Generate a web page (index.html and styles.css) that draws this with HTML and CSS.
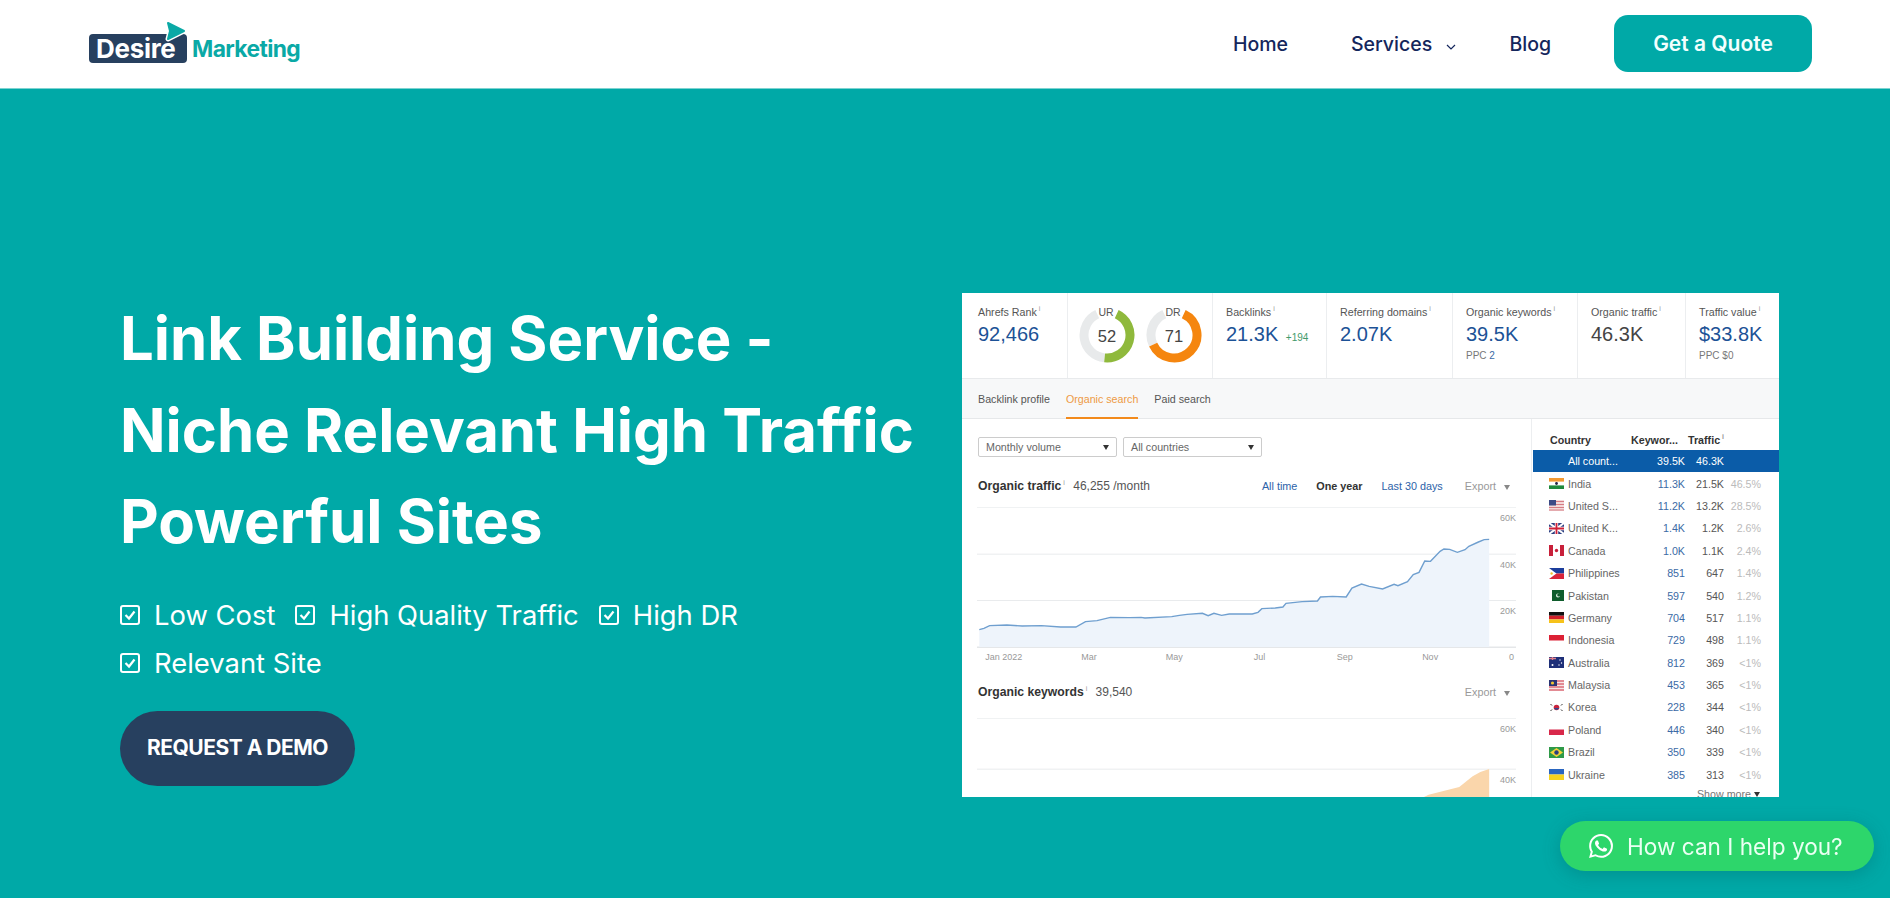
FILE: index.html
```html
<!DOCTYPE html>
<html lang="en">
<head>
<meta charset="utf-8">
<title>Link Building Service - Desire Marketing</title>
<link rel="stylesheet" href="styles.css">
</head>
<body>
<header class="topbar">
	<a class="logo" href="#">
		<span class="logoBox">Desire
			<svg class="logoArrow" width="24" height="24" viewBox="0 0 24 24"><path d="M5 3 L21 11 L5 19 L7 11 Z" fill="#0aa9a6" stroke="#fff" stroke-width="5" stroke-linejoin="round"/><path d="M5 3 L21 11 L5 19 L7 11 Z" fill="#0aa9a6" stroke="#0aa9a6" stroke-width="2" stroke-linejoin="round"/></svg>
		</span>
		<span class="logoWord">Marketing</span>
	</a>
	<nav class="mainnav">
		<a href="#">Home</a>
		<a class="hasMenu" href="#">Services
			<svg width="10" height="6" viewBox="0 0 10 6"><path d="M1 1 L5 5 L9 1" fill="none" stroke="#14265c" stroke-width="1.2"/></svg>
		</a>
		<a class="navLast" href="#">Blog</a>
	</nav>
	<a class="quoteBtn" href="#">Get a Quote</a>
</header>

<section class="hero">
	<div class="heroText">
		<h1>Link Building Service -<br>Niche Relevant High Traffic<br>Powerful Sites</h1>
		<ul class="ticks">
			<li><svg width="20" height="20" viewBox="0 0 20 20"><rect x="1" y="1" width="18" height="18" rx="2" fill="none" stroke="#fff" stroke-width="2"/><path d="M5.5 10 L9 13.5 L14.5 6.5" fill="none" stroke="#fff" stroke-width="2.2"/></svg>Low Cost</li>
			<li><svg width="20" height="20" viewBox="0 0 20 20"><rect x="1" y="1" width="18" height="18" rx="2" fill="none" stroke="#fff" stroke-width="2"/><path d="M5.5 10 L9 13.5 L14.5 6.5" fill="none" stroke="#fff" stroke-width="2.2"/></svg>High Quality Traffic</li>
			<li><svg width="20" height="20" viewBox="0 0 20 20"><rect x="1" y="1" width="18" height="18" rx="2" fill="none" stroke="#fff" stroke-width="2"/><path d="M5.5 10 L9 13.5 L14.5 6.5" fill="none" stroke="#fff" stroke-width="2.2"/></svg>High DR</li>
			<li><svg width="20" height="20" viewBox="0 0 20 20"><rect x="1" y="1" width="18" height="18" rx="2" fill="none" stroke="#fff" stroke-width="2"/><path d="M5.5 10 L9 13.5 L14.5 6.5" fill="none" stroke="#fff" stroke-width="2.2"/></svg>Relevant Site</li>
		</ul>
		<a class="demoBtn" href="#">REQUEST A DEMO</a>
	</div>

	<div class="shot">
		<div class="stats">
			<div class="stat first">
				<div class="statLabel">Ahrefs Rank<sup>i</sup></div>
				<div class="statValue">92,466</div>
			</div>
			<div class="stat gauges">
				<svg width="56" height="60" viewBox="0 0 56 60"><path d="M25.6 50.87 A23 23 0 0 1 18.28 7.15" fill="none" stroke="#e8eaeb" stroke-width="9"/><path d="M37.72 7.15 A23 23 0 0 1 25.6 50.87" fill="none" stroke="#8fb93c" stroke-width="9"/><text class="gaugeNum" x="28" y="35" text-anchor="middle">52</text><text class="gaugeLabel" x="27" y="9" text-anchor="middle">UR</text></svg>
				<svg width="56" height="60" viewBox="0 0 56 60"><path d="M7.15 37.72 A23 23 0 0 1 18.28 7.15" fill="none" stroke="#e8eaeb" stroke-width="9"/><path d="M37.72 7.15 A23 23 0 1 1 7.15 37.72" fill="none" stroke="#f5860f" stroke-width="9"/><text class="gaugeNum" x="28" y="35" text-anchor="middle">71</text><text class="gaugeLabel" x="27" y="9" text-anchor="middle">DR</text></svg>
			</div>
			<div class="stat">
				<div class="statLabel">Backlinks<sup>i</sup></div>
				<div class="statValue">21.3K <small>+194</small></div>
			</div>
			<div class="stat">
				<div class="statLabel">Referring domains<sup>i</sup></div>
				<div class="statValue">2.07K</div>
			</div>
			<div class="stat">
				<div class="statLabel">Organic keywords<sup>i</sup></div>
				<div class="statValue">39.5K</div>
				<div class="statNote">PPC <b>2</b></div>
			</div>
			<div class="stat">
				<div class="statLabel">Organic traffic<sup>i</sup></div>
				<div class="statValue dark">46.3K</div>
			</div>
			<div class="stat last">
				<div class="statLabel">Traffic value<sup>i</sup></div>
				<div class="statValue">$33.8K</div>
				<div class="statNote">PPC $0</div>
			</div>
		</div>

		<div class="tabs">
			<span>Backlink profile</span>
			<span class="active">Organic search</span>
			<span>Paid search</span>
		</div>

		<div class="panels">
			<div class="charts">
				<div class="selects">
					<div class="fakeSelect">Monthly volume<i></i></div>
					<div class="fakeSelect">All countries<i></i></div>
				</div>

				<div class="chartHead">
					<div><b>Organic traffic</b><sup>i</sup> <span>46,255 /month</span></div>
					<div class="chartLinks">
						<a href="#">All time</a>
						<strong>One year</strong>
						<a href="#">Last 30 days</a>
						<em>Export<i></i></em>
					</div>
				</div>
				<div class="chart trafficChart">
					<svg width="539" height="141" viewBox="72 52 1406 423" preserveAspectRatio="none">
						<path class="grid" d="M72 52.5H1478M72 193.5H1478M72 332.5H1478"/>
						<path class="axis" d="M72 472.5H1478M142 458V472M358 458V472M580 458V472M805 458V472M1031 458V472M1254 458V472"/>
						<path class="area" d="M78 420 90 416 105 408 150 406 190 409 240 408 290 412 330 412 355 396 385 393 420 383 470 384 500 383 510 385 580 381 600 377 620 374 660 371 675 378 690 371 710 377 730 373 790 373 805 368 815 357 850 355 870 352 878 341 920 336 960 334 968 322 1000 320 1035 322 1050 295 1075 283 1095 290 1130 298 1160 284 1170 288 1195 276 1210 255 1225 248 1240 214 1255 215 1280 185 1290 178 1305 179 1325 188 1345 180 1355 170 1380 157 1395 150 1408 149V472H78Z"/>
						<path class="line" d="M78 420 90 416 105 408 150 406 190 409 240 408 290 412 330 412 355 396 385 393 420 383 470 384 500 383 510 385 580 381 600 377 620 374 660 371 675 378 690 371 710 377 730 373 790 373 805 368 815 357 850 355 870 352 878 341 920 336 960 334 968 322 1000 320 1035 322 1050 295 1075 283 1095 290 1130 298 1160 284 1170 288 1195 276 1210 255 1225 248 1240 214 1255 215 1280 185 1290 178 1305 179 1325 188 1345 180 1355 170 1380 157 1395 150 1408 149"/>
					</svg>
					<div class="yLabels">
						<span>60K</span>
						<span>40K</span>
						<span>20K</span>
					</div>
				</div>
				<div class="xLabels">
					<span>Jan 2022</span><span>Mar</span><span>May</span><span>Jul</span><span>Sep</span><span>Nov</span><b>0</b>
				</div>

				<div class="chartHead second">
					<div><b>Organic keywords</b><sup>i</sup> <span>39,540</span></div>
					<div class="chartLinks"><em>Export<i></i></em></div>
				</div>
				<div class="chart keywordChart">
					<svg width="539" height="79" viewBox="72 685 1406 237" preserveAspectRatio="none">
						<path class="grid" d="M72 685.5H1478M72 838.5H1478"/>
						<path class="orange" d="M1238 922 1250 915 1330 892 1365 860 1385 847 1408 838V922Z"/>
					</svg>
					<div class="yLabels tall">
						<span>60K</span>
						<span>40K</span>
					</div>
				</div>
			</div>

			<div class="countries">
				<div class="cRow cHead"><span class="cName">Country</span><span class="cWide">Keywor...</span><span class="cTraffic">Traffic<sup>i</sup></span></div>
				<div class="cRow selected"><span></span><span class="cName">All count...</span><span>39.5K</span><span>46.3K</span><span></span></div>

				<div class="cRow"><svg width="15" height="11" viewBox="0 0 15 11"><rect width="15" height="11" fill="#fff"/><rect width="15" height="3.6" fill="#f39a32"/><rect y="7.4" width="15" height="3.6" fill="#1f8a3c"/><circle cx="7.5" cy="5.5" r="1.4" fill="#224"/></svg><span class="cName">India</span><span>11.3K</span><span>21.5K</span><span>46.5%</span></div>
				<div class="cRow"><svg width="15" height="11" viewBox="0 0 15 11"><rect width="15" height="11" fill="#f3d9d9"/><path d="M0 1.5H15M0 4.5H15M0 7.5H15M0 10H15" stroke="#d67c84"/><rect width="7" height="5.5" fill="#3c4a86"/></svg><span class="cName">United S...</span><span>11.2K</span><span>13.2K</span><span>28.5%</span></div>
				<div class="cRow"><svg width="15" height="11" viewBox="0 0 15 11"><rect width="15" height="11" fill="#2c3f80"/><path d="M0 0 15 11M15 0 0 11" stroke="#fff" stroke-width="2"/><path d="M7.5 0V11M0 5.5H15" stroke="#fff" stroke-width="3.4"/><path d="M7.5 0V11M0 5.5H15" stroke="#cf2038" stroke-width="1.8"/></svg><span class="cName">United K...</span><span>1.4K</span><span>1.2K</span><span>2.6%</span></div>
				<div class="cRow"><svg width="15" height="11" viewBox="0 0 15 11"><rect width="15" height="11" fill="#fff"/><rect width="4" height="11" fill="#c8203a"/><rect x="11" width="4" height="11" fill="#c8203a"/><circle cx="7.5" cy="5.5" r="1.7" fill="#c8203a"/></svg><span class="cName">Canada</span><span>1.0K</span><span>1.1K</span><span>2.4%</span></div>
				<div class="cRow"><svg width="15" height="11" viewBox="0 0 15 11"><rect width="15" height="5.5" fill="#1c3d9c"/><rect y="5.5" width="15" height="5.5" fill="#d8233a"/><path d="M0 0 7.5 5.5 0 11Z" fill="#fff"/><circle cx="2.6" cy="5.5" r="1.2" fill="#f0c030"/></svg><span class="cName">Philippines</span><span>851</span><span>647</span><span>1.4%</span></div>
				<div class="cRow"><svg width="15" height="11" viewBox="0 0 15 11"><rect x="3" width="12" height="11" fill="#0f5c2c"/><circle cx="9" cy="5.5" r="2" fill="#e8f4ea"/><circle cx="9.7" cy="5" r="1.5" fill="#0f5c2c"/></svg><span class="cName">Pakistan</span><span>597</span><span>540</span><span>1.2%</span></div>
				<div class="cRow"><svg width="15" height="11" viewBox="0 0 15 11"><rect width="15" height="3.7" fill="#111"/><rect y="3.7" width="15" height="3.7" fill="#d3202a"/><rect y="7.4" width="15" height="3.6" fill="#f6c21a"/></svg><span class="cName">Germany</span><span>704</span><span>517</span><span>1.1%</span></div>
				<div class="cRow"><svg width="15" height="11" viewBox="0 0 15 11"><rect width="15" height="5.5" fill="#dc2135"/></svg><span class="cName">Indonesia</span><span>729</span><span>498</span><span>1.1%</span></div>
				<div class="cRow"><svg width="15" height="11" viewBox="0 0 15 11"><rect width="15" height="11" fill="#1e2f78"/><path d="M0 1.5H7M3.5 0V3" stroke="#e0808c" stroke-width="1.4"/><circle cx="3.5" cy="8" r="1" fill="#fff"/><circle cx="11" cy="3" r=".7" fill="#fff"/><circle cx="12.5" cy="6" r=".7" fill="#fff"/><circle cx="10" cy="8" r=".7" fill="#fff"/></svg><span class="cName">Australia</span><span>812</span><span>369</span><span>&lt;1%</span></div>
				<div class="cRow"><svg width="15" height="11" viewBox="0 0 15 11"><rect width="15" height="11" fill="#f6e4e4"/><path d="M0 1H15M0 4H15M0 7H15M0 10H15" stroke="#cf3344" stroke-width="1.2"/><rect width="8" height="6" fill="#2a3474"/><circle cx="3.5" cy="3" r="1.6" fill="#f0c534"/></svg><span class="cName">Malaysia</span><span>453</span><span>365</span><span>&lt;1%</span></div>
				<div class="cRow"><svg width="15" height="11" viewBox="0 0 15 11"><rect width="15" height="11" fill="#fff"/><circle cx="7.5" cy="5.5" r="2.8" fill="#c8243c"/><path d="M4.9 6a2.8 2.8 0 0 0 5.2 0Z" fill="#2a4a94"/><path d="M1.5 2 3 3.5M12 3.5 13.5 2M1.5 9 3 7.5M12 7.5 13.5 9" stroke="#333"/></svg><span class="cName">Korea</span><span>228</span><span>344</span><span>&lt;1%</span></div>
				<div class="cRow"><svg width="15" height="11" viewBox="0 0 15 11"><rect y="5.5" width="15" height="5.5" fill="#d8284a"/></svg><span class="cName">Poland</span><span>446</span><span>340</span><span>&lt;1%</span></div>
				<div class="cRow"><svg width="15" height="11" viewBox="0 0 15 11"><rect width="15" height="11" fill="#2f9a48"/><path d="M7.5 1 14 5.5 7.5 10 1 5.5Z" fill="#f3d23a"/><circle cx="7.5" cy="5.5" r="2.2" fill="#2a3f80"/></svg><span class="cName">Brazil</span><span>350</span><span>339</span><span>&lt;1%</span></div>
				<div class="cRow"><svg width="15" height="11" viewBox="0 0 15 11"><rect width="15" height="5.5" fill="#2a66c0"/><rect y="5.5" width="15" height="5.5" fill="#f6d21f"/></svg><span class="cName">Ukraine</span><span>385</span><span>313</span><span>&lt;1%</span></div>
				<div class="showMore">Show more<i></i></div>
			</div>
		</div>
	</div>
</section>

<a class="chatBtn" href="#">
	<svg width="24" height="24" viewBox="0 0 24 24"><path fill="#fff" d="M17.472 14.382c-.297-.149-1.758-.867-2.03-.967-.273-.099-.471-.148-.67.15-.197.297-.767.966-.94 1.164-.173.199-.347.223-.644.075-.297-.15-1.255-.463-2.39-1.475-.883-.788-1.48-1.761-1.653-2.059-.173-.297-.018-.458.13-.606.134-.133.298-.347.446-.52.149-.174.198-.298.298-.497.099-.198.05-.371-.025-.52-.075-.149-.669-1.612-.916-2.207-.242-.579-.487-.5-.669-.51-.173-.008-.371-.01-.57-.01-.198 0-.52.074-.792.372-.272.297-1.04 1.016-1.04 2.479 0 1.462 1.065 2.875 1.213 3.074.149.198 2.096 3.2 5.077 4.487.709.306 1.262.489 1.694.625.712.227 1.36.195 1.871.118.571-.085 1.758-.719 2.006-1.413.248-.694.248-1.289.173-1.413-.074-.124-.272-.198-.57-.347m-5.421 7.403h-.004a9.87 9.87 0 01-5.031-1.378l-.361-.214-3.741.982.998-3.648-.235-.374a9.86 9.86 0 01-1.51-5.26c.001-5.45 4.436-9.884 9.888-9.884 2.64 0 5.122 1.03 6.988 2.898a9.825 9.825 0 012.893 6.994c-.003 5.45-4.437 9.884-9.885 9.884m8.413-18.297A11.815 11.815 0 0012.05 0C5.495 0 .16 5.335.157 11.892c0 2.096.547 4.142 1.588 5.945L.057 24l6.305-1.654a11.882 11.882 0 005.683 1.448h.005c6.554 0 11.89-5.335 11.893-11.893a11.821 11.821 0 00-3.48-8.413z"/></svg>
	How can I help you?
</a>
</body>
</html>
```

FILE: styles.css
```css
* {
	box-sizing: border-box;
}

html, body {
	height: 100%;
}

body {
	margin: 0;
	overflow: hidden;
	background: #00a9a7;
	font-family: Inter, "Liberation Sans", sans-serif;
}

a {
	text-decoration: none;
	color: inherit;
}

/* top bar */
.topbar {
	display: flex;
	align-items: center;
	height: 89px;
	padding: 0 78px 1px 89px;
	background: #fff;
	border-bottom: 1px solid #7dd3d1;
}

.logo {
	display: flex;
	align-items: flex-end;
	margin-top: 9px;
}

.logoBox {
	position: relative;
	display: block;
	width: 98px;
	height: 29px;
	padding-left: 7px;
	background: #27405f;
	border-radius: 4px;
	color: #fff;
	font-size: 26px;
	font-weight: 700;
	line-height: 30px;
	letter-spacing: -0.3px;
}

.logoArrow {
	position: absolute;
	top: -14px;
	left: 74px;
}

.logoWord {
	margin-left: 5px;
	color: #0aa9a6;
	font-size: 22.8px;
	font-weight: 700;
	line-height: 29px;
	letter-spacing: -0.6px;
}

.mainnav {
	display: flex;
	align-items: center;
	margin-left: auto;
	margin-right: 63px;
	color: #14265c;
	font-size: 19.5px;
	font-weight: 500;
}

.mainnav .hasMenu {
	margin: 0 53px 0 63px;
}

.mainnav .hasMenu svg {
	margin-left: 9px;
	vertical-align: 1px;
}

.quoteBtn {
	display: block;
	width: 198px;
	height: 57px;
	background: #00a9a7;
	border-radius: 14px;
	color: #f2fffe;
	font-size: 21px;
	font-weight: 600;
	line-height: 57px;
	text-align: center;
}

/* hero */
.hero {
	display: flex;
	align-items: flex-start;
	padding: 204px 0 0 120px;
	color: #fff;
}

.heroText {
	width: 842px;
	flex-shrink: 0;
}

.heroText h1 {
	margin: 0;
	font-size: 59.8px;
	font-weight: 700;
	line-height: 91.5px;
}

.ticks {
	display: flex;
	flex-wrap: wrap;
	width: 680px;
	margin: 23px 0 0;
	padding: 0;
	list-style: none;
	font-size: 27.4px;
	line-height: 48px;
}

.ticks li {
	display: flex;
	align-items: center;
	margin-right: 20px;
}

.ticks svg {
	margin-right: 14px;
}

.demoBtn {
	display: block;
	width: 235px;
	height: 75px;
	margin-top: 24px;
	background: #27405f;
	border-radius: 38px;
	font-size: 21px;
	font-weight: 700;
	line-height: 73px;
	text-align: center;
	letter-spacing: -0.5px;
}

/* ahrefs screenshot */
.shot {
	width: 817px;
	height: 504px;
	flex-shrink: 0;
	overflow: hidden;
	background: #fff;
	color: #555;
	font-family: "Liberation Sans", Arial, sans-serif;
	font-size: 10.7px;
}

.shot sup {
	font-size: 7px;
	color: #999;
	line-height: 0;
	margin-left: 2px;
}

.stats {
	display: grid;
	grid-template-columns: 106px 145px 114px 126px 125px 108px 92px;
	height: 86px;
	border-bottom: 1px solid #e8eaec;
}

.stat {
	padding: 13px 0 0 13px;
	border-right: 1px solid #eceef0;
}

.stat.first {
	padding-left: 16px;
}

.stat.last {
	border-right: 0;
}

.statLabel {
	height: 12px;
	line-height: 12px;
	white-space: nowrap;
}

.statValue {
	margin-top: 4px;
	color: #1c5296;
	font-size: 20px;
	line-height: 24px;
	white-space: nowrap;
}

.statValue.dark {
	color: #444;
}

.statValue small {
	margin-left: 2px;
	color: #3f9a6c;
	font-size: 10px;
}

.statNote {
	margin-top: 4px;
	color: #777;
	font-size: 10px;
	line-height: 12px;
}

.statNote b {
	color: #3b6aa5;
	font-weight: 400;
}

.gauges {
	display: flex;
	padding: 14px 0 0 11px;
	gap: 11px;
}

.gaugeNum {
	font-size: 16.5px;
	fill: #444;
}

.gaugeLabel {
	font-size: 10.5px;
	fill: #555;
}

.tabs {
	display: flex;
	gap: 16px;
	height: 40px;
	padding-left: 16px;
	background: #f7f8f9;
	border-bottom: 1px solid #e6e8ea;
	line-height: 40px;
}

.tabs .active {
	height: 40px;
	color: #ee9a44;
	border-bottom: 2px solid #f28a1b;
}

.panels {
	display: flex;
}

.charts {
	width: 569px;
	padding: 18px 0 0 16px;
}

.selects {
	display: flex;
	gap: 6px;
}

.fakeSelect {
	display: flex;
	align-items: center;
	justify-content: space-between;
	width: 139px;
	height: 20px;
	padding: 0 7px;
	border: 1px solid #ccc;
	border-radius: 2px;
	color: #666;
}

.fakeSelect i, .chartLinks i, .showMore i {
	display: inline-block;
	width: 0;
	height: 0;
	border: 3px solid transparent;
	border-top: 5px solid #333;
	border-bottom: 0;
}

.chartHead {
	display: flex;
	justify-content: space-between;
	align-items: center;
	width: 537px;
	height: 20px;
	margin-top: 19px;
	font-size: 12px;
}

.chartHead b {
	color: #333;
	font-size: 12.2px;
}

.chartHead span {
	margin-left: 5px;
}

.chartLinks {
	display: flex;
	align-items: center;
	font-size: 10.8px;
}

.chartLinks a {
	color: #2c62a8;
}

.chartLinks strong {
	margin: 0 19px 0 19px;
	color: #333;
	font-size: 10.8px;
}

.chartLinks em {
	margin: 0 5px 0 22px;
	color: #999;
	font-style: normal;
}

.chartLinks i {
	margin-left: 8px;
	border-top-color: #888;
}

.chart {
	position: relative;
	width: 539px;
	margin: 11px 0 0 -1px;
}

.chart svg {
	display: block;
}

.keywordChart {
	margin-top: 16px;
}

.grid, .axis {
	fill: none;
	stroke: #e9ebed;
	stroke-width: 1;
	vector-effect: non-scaling-stroke;
}

.axis {
	stroke: #d8dbde;
}

.area {
	fill: #eef4fb;
}

.line {
	fill: none;
	stroke: #6f9fcf;
	stroke-width: 1.4;
	vector-effect: non-scaling-stroke;
}

.orange {
	fill: #fad6ab;
}

.yLabels {
	position: absolute;
	top: 0;
	right: 0;
	display: flex;
	flex-direction: column;
	color: #999;
	font-size: 9px;
	text-align: right;
}

.yLabels span {
	height: 46.5px;
	padding-top: 6px;
}

.yLabels.tall span {
	height: 51px;
}

.xLabels {
	display: flex;
	width: 553px;
	height: 12px;
	margin: 3px 0 0 -17px;
	color: #999;
	font-size: 9px;
	line-height: 12px;
}

.xLabels span {
	width: 85.3px;
	text-align: center;
}

.xLabels b {
	margin-left: auto;
	font-weight: 400;
}

/* country table */
.countries {
	width: 248px;
	padding: 11px 0 0 1px;
	border-left: 1px solid #eceef0;
}

.cRow {
	display: grid;
	grid-template-columns: 15px 68px 53px 39px 37px;
	align-items: center;
	height: 22.4px;
	padding-left: 16px;
	color: #555;
	text-align: right;
	white-space: nowrap;
}

.cRow svg {
	display: block;
}

.cRow span:nth-of-type(2) {
	color: #3b6aa5;
}

.cRow span:nth-of-type(4) {
	color: #bbb;
}

.cRow .cName {
	padding-left: 4px;
	color: #666;
	text-align: left;
}

.cHead {
	display: flex;
	height: 20px;
	padding-left: 17px;
	color: #333;
	font-weight: 700;
}

.cHead .cName {
	width: 81px;
	padding-left: 0;
	color: #333;
}

.cHead span:nth-of-type(2) {
	width: 57px;
	color: #333;
	text-align: left;
}

.selected {
	height: 22px;
	margin-bottom: 0.4px;
	background: #0b5ca8;
	color: #fff;
}

.selected .cName, .selected span:nth-of-type(n) {
	color: #fff;
}

.showMore {
	margin-top: 2px;
	padding-right: 19px;
	color: #777;
	text-align: right;
}

.showMore i {
	margin-left: 3px;
	border-top-color: #333;
	vertical-align: 1px;
}

/* whatsapp */
.chatBtn {
	position: fixed;
	right: 16px;
	bottom: 27px;
	display: flex;
	align-items: center;
	gap: 14px;
	height: 50px;
	padding-left: 29px;
	width: 314px;
	background: #2dd66b;
	border-radius: 25px;
	box-shadow: 0 4px 18px rgba(0, 90, 90, 0.3);
	color: #eafff2;
	font-size: 22.6px;
	font-weight: 400;
}
```
